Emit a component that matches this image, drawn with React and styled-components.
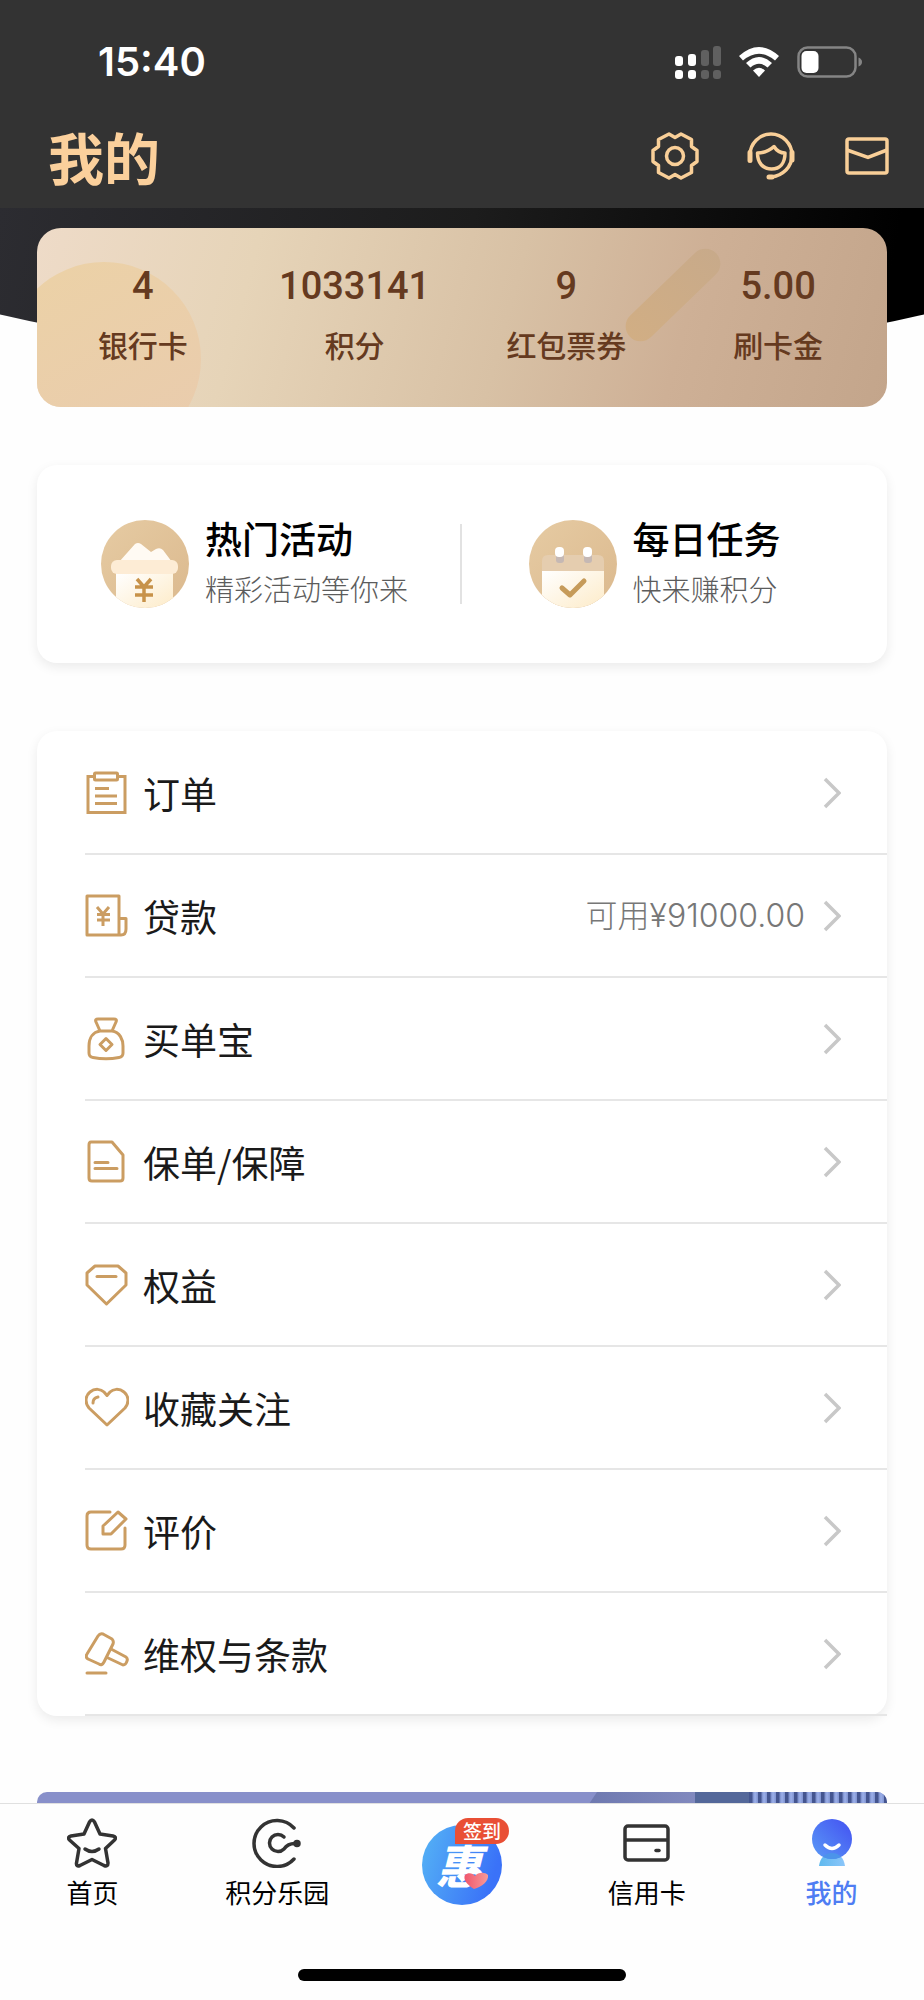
import React from "react";
import styled, { createGlobalStyle, css } from "styled-components";

const assets = [
  { value: "4", label: "银行卡" },
  { value: "1033141", label: "积分" },
  { value: "9", label: "红包票券" },
  { value: "5.00", label: "刷卡金" },
];

const menu = [
  { label: "订单", icon: OrderIcon },
  { label: "贷款", icon: LoanIcon, extra: "可用¥91000.00" },
  { label: "买单宝", icon: PurseIcon },
  { label: "保单/保障", icon: PolicyIcon },
  { label: "权益", icon: BenefitIcon },
  { label: "收藏关注", icon: HeartIcon },
  { label: "评价", icon: ReviewIcon },
  { label: "维权与条款", icon: GavelIcon },
];

export default function App() {
  return (
    <Page>
      <GlobalStyle />

      <Header>
        <StatusBar>
          <Clock>15:40</Clock>
          <StatusIcons>
            <SignalIcon />
            <WifiIcon />
            <BatteryIcon />
          </StatusIcons>
        </StatusBar>

        <TitleBar>
          <Title>我的</Title>
          <Actions>
            <IconButton aria-label="设置">
              <GearIcon />
            </IconButton>
            <IconButton aria-label="客服">
              <ServiceIcon />
            </IconButton>
            <IconButton aria-label="消息">
              <MailIcon />
            </IconButton>
          </Actions>
        </TitleBar>
      </Header>

      <Content>
        <AssetCard>
          <Disc />
          <Stripe />
          {assets.map((item) => (
            <Asset key={item.label} href="#">
              <strong>{item.value}</strong>
              <span>{item.label}</span>
            </Asset>
          ))}
        </AssetCard>

        <PromoCard>
          <Promo href="#">
            <ActivityIcon />
            <PromoText>
              <h2>热门活动</h2>
              <p>精彩活动等你来</p>
            </PromoText>
          </Promo>
          <Divider />
          <Promo href="#">
            <TaskIcon />
            <PromoText>
              <h2>每日任务</h2>
              <p>快来赚积分</p>
            </PromoText>
          </Promo>
        </PromoCard>

        <MenuCard>
          {menu.map(({ label, icon: Icon, extra }) => (
            <li key={label}>
              <MenuLink href="#">
                <Icon />
                <MenuLabel>{label}</MenuLabel>
                {extra && <MenuExtra>{extra}</MenuExtra>}
                <ChevronIcon />
              </MenuLink>
            </li>
          ))}
        </MenuCard>

        <Banner>
          <BannerShade />
          <BannerDeep />
          <BannerBars />
        </Banner>
      </Content>

      <Footer>
        <Tabs>
          <Tab href="#">
            <StarIcon />
            首页
          </Tab>
          <Tab href="#">
            <PointsIcon />
            积分乐园
          </Tab>
          <Tab href="#" aria-label="签到">
            <LogoWrap>
              <LogoIcon />
              <Badge>签到</Badge>
            </LogoWrap>
          </Tab>
          <Tab href="#">
            <CardIcon />
            信用卡
          </Tab>
          <Tab href="#" $active>
            <MeIcon />
            我的
          </Tab>
        </Tabs>
        <HomeIndicator />
      </Footer>
    </Page>
  );
}

/* status bar icons */

function SignalIcon() {
  return (
    <svg width="46" height="34" viewBox="0 0 46 34">
      <g fill="#fff">
        <rect x="0" y="11" width="8" height="10" rx="3" />
        <rect x="13" y="9" width="8" height="12" rx="3" />
        <rect x="0" y="25" width="8" height="9" rx="3" />
        <rect x="13" y="25" width="8" height="9" rx="3" />
      </g>
      <g fill="#606060">
        <rect x="26" y="5" width="8" height="16" rx="3" />
        <rect x="38" y="1" width="8" height="20" rx="3" />
        <rect x="26" y="25" width="8" height="9" rx="3" />
        <rect x="38" y="25" width="8" height="9" rx="3" />
      </g>
    </svg>
  );
}

function WifiIcon() {
  return (
    <svg width="40" height="34" viewBox="0 0 40 34" fill="#fff">
      <path d="M0 11Q20-7 40 11L36 15.500Q20 2 4 15.500Z" />
      <path d="M7 18Q20 6 33 18L28.500 22.500Q20 15 11.500 22.500Z" />
      <path d="M14 25.500Q20 20 26 25.500L20 32Z" />
    </svg>
  );
}

function BatteryIcon() {
  return (
    <svg width="66" height="34" viewBox="0 0 66 34">
      <rect x="1.500" y="2.500" width="57" height="29" rx="9" fill="none" stroke="#858585" strokeWidth="2.500" />
      <rect x="4.500" y="6" width="17" height="22" rx="5" fill="#fff" />
      <path d="M61.500 12.500Q65 14 65 17T61.500 21.500Z" fill="#858585" />
    </svg>
  );
}

/* header icons */

function GearIcon() {
  return (
    <svg width="48" height="48" viewBox="0 0 48 48" fill="none" stroke="#f9cf98" strokeWidth="3.500">
      <path
        strokeLinejoin="round"
        d="M18 2L24 5.500L30 2L40.500 7.500V14.500L46 18.500V29.500L40.500 33.500V40.500L30 46L24 42.500L18 46L7.500 40.500V33.500L2 29.500V18.500L7.500 14.500V7.500Z"
      />
      <circle cx="24" cy="24" r="8.500" />
    </svg>
  );
}

function ServiceIcon() {
  return (
    <svg width="48" height="48" viewBox="0 0 48 48" fill="none" stroke="#f9cf98" strokeWidth="3.500">
      <path d="M3 28V23A21 21 0 0 1 45 23C45 35 36 43.500 24 45" />
      <path strokeWidth="5" strokeLinecap="round" d="M3 20.500V28.500M45 20.500V28M22 45H25" />
      <path strokeLinejoin="round" d="M10.500 21Q20 21 27 14.500Q31 21 38 21C38 31 33 37 24.500 37S10.500 31 10.500 21Z" />
    </svg>
  );
}

function MailIcon() {
  return (
    <svg width="48" height="48" viewBox="0 0 48 48" fill="none" stroke="#f9cf98" strokeWidth="3.500">
      <rect x="4" y="7" width="40" height="34" rx="2" />
      <path d="M4 18L25 25.500L44 18" />
    </svg>
  );
}

/* promo icons */

function ActivityIcon() {
  return (
    <svg width="90" height="90" viewBox="0 0 90 90">
      <defs>
        <linearGradient id="gold" x1="0" y1="0" x2="1" y2="1">
          <stop offset="0" stopColor="#e6cba3" />
          <stop offset="1" stopColor="#dbb98e" />
        </linearGradient>
        <linearGradient id="paper" x1="0" y1="0" x2="1" y2="1">
          <stop offset="0" stopColor="#ffffff" />
          <stop offset="1" stopColor="#fdebc8" />
        </linearGradient>
        <clipPath id="round">
          <circle cx="45" cy="45" r="44" />
        </clipPath>
      </defs>
      <g clipPath="url(#round)">
        <rect width="90" height="90" fill="url(#gold)" />
        <path d="M19 43L35 25Q38 23 41 25L51 33L56 30Q60 28 63 31L72 43Z" fill="#fffaf3" />
        <path d="M16 54H73V90H16Z" fill="url(#paper)" />
        <rect x="11" y="41" width="67" height="14" rx="6" fill="#fdecd5" />
      </g>
      <path
        d="M37 60L44 68L51 60M44 68V83M35 68H53M35 76H53"
        fill="none"
        stroke="#c79249"
        strokeWidth="3.500"
      />
    </svg>
  );
}

function TaskIcon() {
  return (
    <svg width="90" height="90" viewBox="0 0 90 90">
      <g clipPath="url(#round)">
        <rect width="90" height="90" fill="url(#gold)" />
        <path d="M14 90V42Q14 36 20 36H70Q76 36 76 42V90Z" fill="#e5cdaf" />
        <path d="M14 52H76V90H14Z" fill="url(#paper)" />
        <rect x="28" y="35" width="8" height="9" rx="3" fill="#c5b8b4" />
        <rect x="56" y="35" width="8" height="9" rx="3" fill="#c5b8b4" />
        <rect x="27" y="28" width="9" height="10" rx="4" fill="#fff" />
        <rect x="55" y="28" width="9" height="10" rx="4" fill="#fff" />
      </g>
      <path
        d="M34 69L42 76L56 62"
        fill="none"
        stroke="#c69b5a"
        strokeWidth="5"
        strokeLinecap="round"
        strokeLinejoin="round"
      />
    </svg>
  );
}

/* menu icons */

function LineIcon({ children }) {
  return (
    <svg width="44" height="44" viewBox="0 0 44 44" fill="none" stroke="#cb9d62" strokeWidth="3">
      {children}
    </svg>
  );
}

function OrderIcon() {
  return (
    <LineIcon>
      <path d="M9 5.500H3V41.500H40V5.500H33" />
      <rect x="9.500" y="2" width="23" height="7" rx="1" />
      <path d="M10 17.500H24M10 25H32M10 32.500H32" />
    </LineIcon>
  );
}

function LoanIcon() {
  return (
    <LineIcon>
      <path d="M34 41V2H2V41H36C40 41 41 38 41 35V24.500H34" strokeLinejoin="round" />
      <path d="M12 13L18 20L24 13M18 20V32M12 20.500H25M12 26H25" />
    </LineIcon>
  );
}

function PurseIcon() {
  return (
    <LineIcon>
      <path
        strokeLinejoin="round"
        d="M15 14L11 5C10 3 11 2 13 2H29C31 2 32 3 31 5L27 14C35 15 38 23 38 29V36C38 39 37 40 34 40.500Q21 43 8 40.500C5 40 4 39 4 36V29C4 21 8 15 15 14ZH27"
      />
      <path d="M21 21.500L27 27.500L21 33.500L15 27.500Z" strokeLinejoin="round" />
    </LineIcon>
  );
}

function PolicyIcon() {
  return (
    <LineIcon>
      <path strokeLinejoin="round" d="M6 2H27L38 15V38Q38 41 35 41H7Q4 41 4 38V5Q4 2 6 2Z" />
      <path d="M10 22.500H23M10 28.500H32" strokeLinecap="round" />
    </LineIcon>
  );
}

function BenefitIcon() {
  return (
    <LineIcon>
      <path strokeLinejoin="round" d="M10 3H33L41 10V22L21.500 41L2 22V10Z" />
      <path d="M12 13.500H31" strokeLinecap="round" />
    </LineIcon>
  );
}

function HeartIcon() {
  return (
    <LineIcon>
      <path
        strokeLinejoin="round"
        d="M22 39L4 22C-1 16 1 9 5 6C10 2 16 3 19 6L22 9.500L25 6C28 3 34 2 39 6C43 9 45 16 40 22Z"
      />
      <path d="M8 17Q8 12 13 11" strokeLinecap="round" />
    </LineIcon>
  );
}

function ReviewIcon() {
  return (
    <LineIcon>
      <path strokeLinecap="round" d="M25 3H6Q2 3 2 7V36Q2 40 6 40H36Q40 40 40 36V19" />
      <path strokeLinejoin="round" d="M33 3L41 10L26 25H18V17Z" />
    </LineIcon>
  );
}

function GavelIcon() {
  return (
    <LineIcon>
      <path
        strokeLinejoin="round"
        d="M13 4Q15 1 18 2L27 7Q29 9 28 12L19 30Q17 34 14 32L3 27Q0 25 2 22Z"
      />
      <path strokeLinejoin="round" d="M26 17L41 25Q43 27 42 29Q41 33 38 33L21 25" />
      <path d="M2 41H21" strokeLinecap="round" />
    </LineIcon>
  );
}

function ChevronIcon() {
  return (
    <svg width="18" height="32" viewBox="0 0 18 32" fill="none" stroke="#c8c8c8" strokeWidth="3.500">
      <path d="M2 2L16 16L2 30" />
    </svg>
  );
}

/* tab icons */

function StarIcon() {
  return (
    <svg width="50" height="50" viewBox="0 0 50 50" fill="none" stroke="#333" strokeWidth="3.500" strokeLinecap="round">
      <path
        strokeLinejoin="round"
        d="M22.500 4Q25 0 27.500 4L33 16L46 18Q50 19 47.500 22L38.500 30.500L41 45Q41 49 37 47.500L25 41.500L13 47.500Q9 49 9.500 45L12 30.500L2.500 22Q0 19 4 18L17 16Z"
      />
      <path d="M18 31Q25 36 32 31" />
    </svg>
  );
}

function PointsIcon() {
  return (
    <svg width="50" height="50" viewBox="0 0 50 50" fill="none" stroke="#333" strokeWidth="3.500" strokeLinecap="round">
      <path d="M42 10A23 23 0 1 0 42 41" />
      <path d="M32 19A8.500 8.500 0 1 0 32 31Q36 25 44 25.500" />
      <circle cx="45" cy="25.500" r="2" fill="#333" />
    </svg>
  );
}

function CardIcon() {
  return (
    <svg width="50" height="50" viewBox="0 0 50 50" fill="none" stroke="#333" strokeWidth="3.500">
      <rect x="3" y="8" width="43" height="34" rx="3" />
      <path d="M3 22H46" />
      <path d="M34 32.500H37" strokeLinecap="round" />
    </svg>
  );
}

function MeIcon() {
  return (
    <svg width="50" height="50" viewBox="0 0 50 50">
      <defs>
        <linearGradient id="head" x1="0" y1="1" x2="1" y2="0">
          <stop offset="0" stopColor="#5a9bf6" />
          <stop offset="1" stopColor="#4350f2" />
        </linearGradient>
        <linearGradient id="bust" x1="0" y1="0" x2="1" y2="0">
          <stop offset="0" stopColor="#5fb9ee" />
          <stop offset="1" stopColor="#8cc6fa" />
        </linearGradient>
      </defs>
      <path d="M12 48C13 40 18 35 25 35S37 40 38 48Z" fill="url(#bust)" />
      <circle cx="25" cy="21" r="20" fill="url(#head)" />
      <path d="M16 39C18 36.500 21 35 25 35S32 36.500 34 39Q25 43 16 39Z" fill="#4b94ea" />
      <path d="M18 27Q25 34 32 27" fill="none" stroke="#fff" strokeWidth="3.500" strokeLinecap="round" />
    </svg>
  );
}

function LogoIcon() {
  return (
    <svg width="80" height="80" viewBox="0 0 80 80">
      <defs>
        <linearGradient id="logo" x1="0" y1="0" x2="1" y2="0.300">
          <stop offset="0" stopColor="#55b4f5" />
          <stop offset="1" stopColor="#3a72f8" />
        </linearGradient>
        <linearGradient id="love" x1="0" y1="0" x2="1" y2="0">
          <stop offset="0" stopColor="#f0566c" />
          <stop offset="1" stopColor="#f79a98" />
        </linearGradient>
      </defs>
      <circle cx="40" cy="40" r="40" fill="url(#logo)" />
      <LogoText x="37" y="59" textAnchor="middle">
        惠
      </LogoText>
      <path d="M52 64C44 59 41 54 43 50C46 47 51 48 53 51C56 47 63 47 66 50C67 56 60 62 52 64Z" fill="url(#love)" />
    </svg>
  );
}

const GlobalStyle = createGlobalStyle`
  * {
    box-sizing: border-box;
    margin: 0;
    padding: 0;
  }

  body {
    background-color: #fefefe;
    color: #1a1a1a;
    font-family: "Noto Sans CJK SC", sans-serif;
  }

  a {
    color: inherit;
    text-decoration: none;
  }

  ul {
    list-style: none;
  }

  svg {
    display: block;
    flex-shrink: 0;
  }
`;

const Page = styled.div`
  height: 100vh;
  display: flex;
  flex-direction: column;
`;

const Header = styled.header`
  padding: 40px 33px 12px 48px;
  background-color: #333;
`;

const StatusBar = styled.div`
  height: 44px;
  padding: 0 28px 0 50px;
  display: flex;
  justify-content: space-between;
  align-items: center;
`;

const Clock = styled.time`
  color: #fff;
  font: 600 40px/44px Inter, sans-serif;
`;

const StatusIcons = styled.div`
  display: flex;
  align-items: center;
  gap: 18px;
`;

const TitleBar = styled.div`
  margin-top: 32px;
  height: 80px;
  display: flex;
  justify-content: space-between;
  align-items: center;
`;

const Title = styled.h1`
  color: #fbd09c;
  font-size: 56px;
  font-weight: 700;
  line-height: 80px;
`;

const Actions = styled.div`
  display: flex;
  gap: 48px;
`;

const IconButton = styled.button`
  border: none;
  background: none;
  cursor: pointer;
`;

const Content = styled.main`
  position: relative;
  flex: 1;
  min-height: 0;
  padding: 20px 37px 0;
  overflow-y: auto;
  scrollbar-width: none;

  &::before {
    content: "";
    position: absolute;
    top: 0;
    left: 0;
    right: 0;
    height: 152px;
    background: linear-gradient(100deg, #2c2c31, #1c1c1c 50%, #000 95%);
    clip-path: ellipse(70% 100% at 50% 0);
  }
`;

const AssetCard = styled.section`
  position: relative;
  height: 179px;
  padding: 34px 3px 0 0;
  display: grid;
  grid-template-columns: repeat(4, 1fr);
  align-items: start;
  overflow: hidden;
  border-radius: 24px;
  background: linear-gradient(105deg, #eedbc8, #e6d4b8 25%, #d8c1a5 55%, #ceb096 75%, #c3a58b);
  color: #653a20;
`;

const Disc = styled.i`
  position: absolute;
  top: 34px;
  left: -30px;
  width: 194px;
  height: 194px;
  border-radius: 50%;
  background: linear-gradient(150deg, #ecd2a6, #e9cbae);
`;

const Stripe = styled.i`
  position: absolute;
  top: 7px;
  left: 73%;
  width: 30px;
  height: 120px;
  transform: rotate(46deg);
  border-radius: 15px;
  background: linear-gradient(#c8aa8a, #d1ae84);
`;

const Asset = styled.a`
  position: relative;
  display: flex;
  flex-direction: column;
  align-items: center;

  strong {
    font: 500 38px/48px Roboto, sans-serif;
  }

  span {
    margin-top: 12px;
    font-size: 30px;
    font-weight: 500;
    line-height: 44px;
  }
`;

const card = css`
  position: relative;
  border-radius: 20px;
  background-color: #fff;
  box-shadow: 0 4px 12px rgba(0, 0, 0, 0.08);
`;

const PromoCard = styled.section`
  ${card}
  margin-top: 58px;
  height: 198px;
  padding-left: 63px;
  display: flex;
  align-items: center;
`;

const Promo = styled.a`
  flex: 1;
  display: flex;
  align-items: center;
  gap: 15px;
`;

const PromoText = styled.div`
  padding-bottom: 4px;

  h2 {
    color: #000;
    font-size: 37px;
    font-weight: 500;
    line-height: 52px;
  }

  p {
    color: #5c5c5c;
    font-size: 29px;
    font-weight: 300;
    line-height: 48px;
  }
`;

const Divider = styled.i`
  width: 2px;
  height: 80px;
  margin-right: 66px;
  background-color: #e2e2e2;
`;

const MenuCard = styled.ul`
  ${card}
  margin-top: 68px;
  padding-top: 1px;
`;

const MenuLink = styled.a`
  height: 123px;
  margin-left: 48px;
  padding-right: 46px;
  display: flex;
  align-items: center;
  border-bottom: 2px solid #e6e6e6;
`;

const MenuLabel = styled.span`
  flex: 1;
  margin-left: 14px;
  font-size: 37px;
  line-height: 52px;
`;

const MenuExtra = styled.span`
  margin-right: 18px;
  color: #777;
  font: 300 32px/44px Inter, "Noto Sans CJK SC", sans-serif;
`;

const Banner = styled.section`
  position: relative;
  height: 180px;
  margin-top: 76px;
  display: flex;
  justify-content: flex-end;
  overflow: hidden;
  border-radius: 10px;
  background-color: #8890ca;
`;

const BannerShade = styled.i`
  width: 106px;
  background: linear-gradient(90deg, #6e79b0, #8189be);
  clip-path: polygon(8px 0, 100% 0, 100% 100%, 0 100%, 0 12px);
`;

const BannerDeep = styled.i`
  width: 54px;
  background-color: #54689a;
`;

const BannerBars = styled.i`
  width: 138px;
  background: repeating-linear-gradient(90deg, #44558f 0 3px, #7d90cc 4px, #9cb0ea 6px, #8093cf 9px);
`;

const Footer = styled.footer`
  position: relative;
  padding-bottom: 19px;
  border-top: 1px solid #e0e0e0;
  background-color: #fefefe;
`;

const Tabs = styled.nav`
  height: 165px;
  display: grid;
  grid-template-columns: repeat(5, 1fr);
`;

const Tab = styled.a`
  padding-top: 14px;
  display: flex;
  flex-direction: column;
  align-items: center;
  gap: 4px;
  color: ${({ $active }) => ($active ? "#4f7df3" : "#000")};
  font-size: 26px;
  font-weight: ${({ $active }) => ($active ? 500 : 400)};
  line-height: 40px;
`;

const LogoWrap = styled.div`
  position: relative;
  margin-top: 7px;
`;

const LogoText = styled.text`
  fill: #fff;
  font: italic 900 46px "Noto Sans CJK SC", sans-serif;
`;

const Badge = styled.span`
  position: absolute;
  top: -7px;
  left: 33px;
  width: 54px;
  height: 26px;
  border-radius: 13px 13px 13px 0;
  background-color: #e94f35;
  color: #fff;
  font-size: 19px;
  font-weight: 500;
  line-height: 26px;
  text-align: center;
`;

const HomeIndicator = styled.div`
  width: 328px;
  height: 12px;
  margin: 0 auto;
  border-radius: 6px;
  background-color: #000;
`;
